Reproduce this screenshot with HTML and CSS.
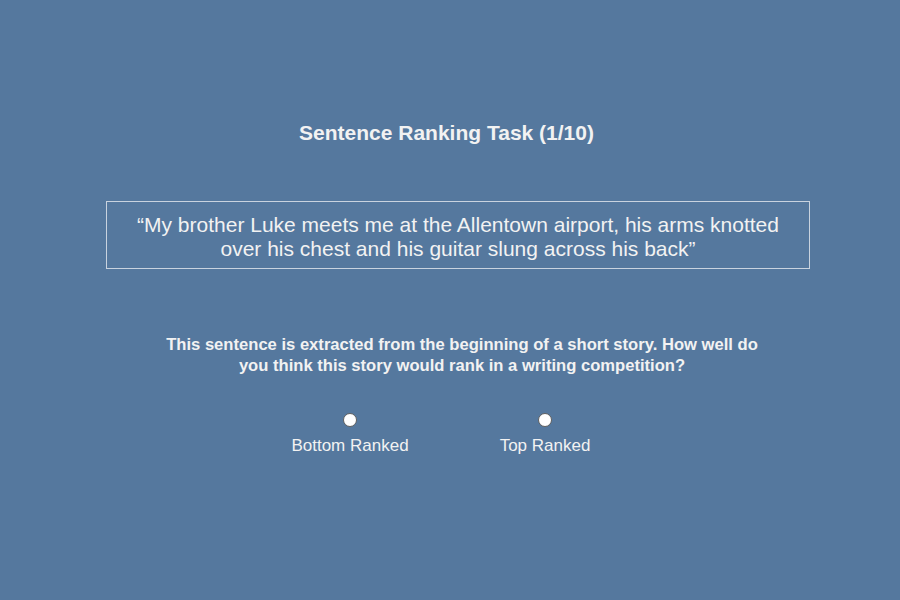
FILE: index.html
```html
<!DOCTYPE html>
<html>
<head>
<meta charset="utf-8">
<link rel="stylesheet" href="styles.css">
</head>
<body>
<main class="page">
  <h1 class="title">Sentence Ranking Task (1/10)</h1>
  <div class="sentence">“My brother Luke meets me at the Allentown airport, his arms knotted over his chest and his guitar slung across his back”</div>
  <p class="question">This sentence is extracted from the beginning of a short story. How well do you think this story would rank in a writing competition?</p>
  <div class="scale">
    <label class="option"><span class="radio"></span><span class="label">Bottom Ranked</span></label>
    <label class="option"><span class="radio"></span><span class="label">Top Ranked</span></label>
  </div>
</main>
</body>
</html>
```
FILE: styles.css
```css
html, body {
  margin: 0;
  padding: 0;
  background: #55789e;
  width: 900px;
  height: 600px;
  overflow: hidden;
}
body {
  font-family: "Liberation Sans", Arial, sans-serif;
  color: #f2f2f2;
}
.page {
  display: flex;
  flex-direction: column;
  align-items: stretch;
  padding-top: 121px;
}
.title {
  margin: 0 7px 0 0;
  font-size: 21px;
  font-weight: bold;
  line-height: 24px;
  text-align: center;
}
.sentence {
  margin: 56px 90px 0 106px;
  border: 1px solid #c9d3df;
  padding: 11px 20px 7px 20px;
  font-size: 21px;
  line-height: 24px;
  text-align: center;
}
.question {
  margin: 65px 128px 0 152px;
  font-size: 16.6px;
  font-weight: bold;
  line-height: 21px;
  text-align: center;
}
.scale {
  display: flex;
  justify-content: center;
  gap: 80px;
  margin: 37px 0 0 -5px;
}
.option {
  display: flex;
  flex-direction: column;
  align-items: center;
  gap: 9px;
  width: 115px;
}
.radio {
  width: 12px;
  height: 12px;
  border-radius: 50%;
  background: #ffffff;
  border: 1px solid #5f5f5f;
}
.label {
  font-size: 17px;
  line-height: 20px;
  white-space: nowrap;
}
```
